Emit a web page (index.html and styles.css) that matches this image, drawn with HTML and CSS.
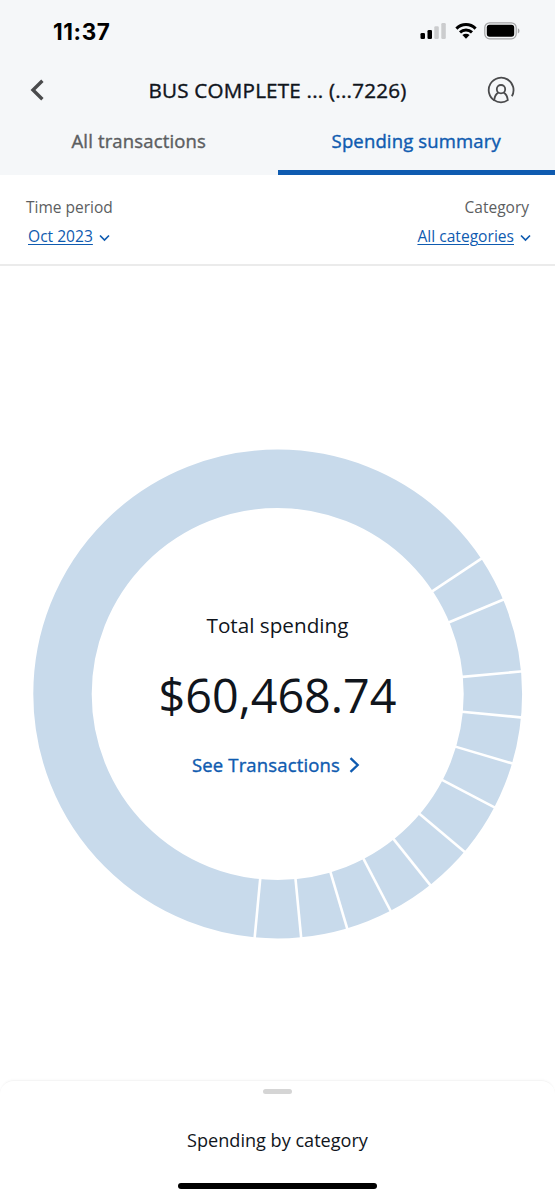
FILE: index.html
```html
<!DOCTYPE html>
<html lang="en">
<head>
    <meta charset="UTF-8">
    <meta name="viewport" content="width=device-width, initial-scale=1.0">
    <title>Spending summary</title>
    <link rel="stylesheet" href="styles.css">
</head>
<body>
    <header class="header">
        <div class="status-bar">
            <span class="time">11:37</span>
            <div class="status-icons">
                <svg class="signal" width="27" height="18" viewBox="0 0 27 18">
                    <rect x="0.5" y="11" width="4.5" height="6" rx="1.3"/>
                    <rect x="7.5" y="8" width="4.5" height="9" rx="1.3"/>
                    <rect class="off" x="14.3" y="4.2" width="4.5" height="12.8" rx="1.3"/>
                    <rect class="off" x="21.3" y="1" width="4.5" height="16" rx="1.3"/>
                </svg>
                <svg class="wifi" width="22" height="18" viewBox="0 0 22 18">
                    <path d="M1.4 6.6C6.8 1.2 15.2 1.2 20.6 6.6"/>
                    <path d="M5 10.3C8.4 7.1 13.6 7.1 17 10.3"/>
                    <path class="dot" d="M7.4 13.1C9.5 11.3 12.5 11.3 14.6 13.1L11 16.8Z"/>
                </svg>
                <svg class="battery" width="36" height="18" viewBox="0 0 36 18">
                    <rect class="shell" x="0.8" y="0.8" width="31.4" height="16" rx="4.8"/>
                    <rect x="2.8" y="2.8" width="27.4" height="12" rx="2.8"/>
                    <path class="tip" d="M33.8 6.3c2.2 .8 2.2 4.4 0 5.2z"/>
                </svg>
            </div>
        </div>

        <div class="nav-bar">
            <svg class="back" width="14" height="22" viewBox="0 0 14 22">
                <path d="M12.4 1.8L3 11L12.4 20.2"/>
            </svg>
            <h1 class="title">BUS COMPLETE ... (...7226)</h1>
            <svg class="profile" width="28" height="28" viewBox="0 0 28 28">
                <path d="M7.6 24.6A12.4 12.4 0 1 1 24.9 20.2"/>
                <circle cx="14" cy="13.2" r="4.2"/>
                <path d="M11.4 16.6C8.6 18 7.6 20.6 7.2 24.1C11 27.1 17 27.1 20.8 24.1C20.4 20.6 19.4 18 16.6 16.6"/>
            </svg>
        </div>

        <nav class="tabs">
            <a class="tab">All transactions</a>
            <a class="tab active">Spending summary</a>
        </nav>
    </header>

    <section class="filters">
        <div class="filter">
            <div class="filter-label">Time period</div>
            <div class="filter-value">
                <a class="link">Oct 2023</a>
                <svg class="chevron" width="11" height="8" viewBox="0 0 11 8"><path d="M1 1.5L5.5 6L10 1.5"/></svg>
            </div>
        </div>
        <div class="filter right">
            <div class="filter-label">Category</div>
            <div class="filter-value">
                <a class="link">All categories</a>
                <svg class="chevron" width="11" height="8" viewBox="0 0 11 8"><path d="M1 1.5L5.5 6L10 1.5"/></svg>
            </div>
        </div>
    </section>

    <main class="chart">
        <svg class="donut" width="490" height="490" viewBox="-244.7 -245 490 490">
            <circle class="ring" r="215.2"/>
            <g class="dividers">
                <path d="M180 0H250" transform="rotate(-33.6)"/>
                <path d="M180 0H250" transform="rotate(-22.7)"/>
                <path d="M180 0H250" transform="rotate(-5.3)"/>
                <path d="M180 0H250" transform="rotate(5.5)"/>
                <path d="M180 0H250" transform="rotate(16.5)"/>
                <path d="M180 0H250" transform="rotate(27.6)"/>
                <path d="M180 0H250" transform="rotate(40.2)"/>
                <path d="M180 0H250" transform="rotate(51.4)"/>
                <path d="M180 0H250" transform="rotate(62.5)"/>
                <path d="M180 0H250" transform="rotate(73.5)"/>
                <path d="M180 0H250" transform="rotate(84.5)"/>
                <path d="M180 0H250" transform="rotate(95.4)"/>
            </g>
        </svg>
        <div class="summary">
            <div class="summary-label">Total spending</div>
            <div class="amount">$60,468.74</div>
            <a class="see-transactions">
                <span class="see-label">See Transactions</span>
                <svg width="11" height="16" viewBox="0 0 11 16"><path d="M1.5 1.2L8.7 8L1.5 14.8"/></svg>
            </a>
        </div>
    </main>

    <footer class="sheet">
        <div class="handle"></div>
        <div class="sheet-title">Spending by category</div>
        <div class="home-indicator"></div>
    </footer>
</body>
</html>
```
FILE: styles.css
```css
:root {
    --blue: #0f5bb0;
    --ring: #c8daeb;
    --text: #10151c;
    --gray: #5c5e61;
    --header-bg: #f5f7f9;
}

* {
    margin: 0;
    padding: 0;
    box-sizing: border-box;
}

body {
    width: 555px;
    height: 1200px;
    display: flex;
    flex-direction: column;
    overflow: hidden;
    background: #fff;
    color: var(--text);
    font-family: 'Open Sans', 'Noto Sans', sans-serif;
}

svg {
    display: block;
    flex: none;
}

a, span, div, h1 {
    white-space: nowrap;
}

.header {
    height: 175px;
    background: var(--header-bg);
}

.status-bar {
    height: 62px;
    display: flex;
    justify-content: space-between;
    align-items: center;
    padding: 0 35px 0 53px;
}

.time {
    font-family: Inter, sans-serif;
    font-size: 22.5px;
    font-weight: 700;
    letter-spacing: 0.6px;
    color: #000;
}

.status-icons {
    display: flex;
    align-items: center;
    gap: 7.5px;
}

.signal .off {
    fill: #cbccce;
}

.wifi path {
    fill: none;
    stroke: #000;
    stroke-width: 3;
}

.wifi .dot {
    fill: #000;
    stroke: none;
}

.battery .shell {
    fill: none;
    stroke: #a2a3a5;
    stroke-width: 1.2;
}

.battery .tip {
    fill: #a2a3a5;
}

.nav-bar {
    height: 55px;
    display: grid;
    grid-template-columns: 1fr auto 1fr;
    align-items: center;
    padding: 0 40px 0 30px;
}

.back path {
    fill: none;
    stroke: #4a4b4d;
    stroke-width: 3.4;
}

/* thin stroke gives a medium weight between 400 and 600 */
.title,
.tab,
.see-label {
    font-weight: 400;
    -webkit-text-stroke: 0.4px currentColor;
}

.title {
    padding-left: 10px;
    font-size: 20.6px;
    letter-spacing: 0.22px;
}

.profile {
    justify-self: end;
}

.profile path,
.profile circle {
    fill: none;
    stroke: #4a4b4d;
    stroke-width: 1.8;
}

.tabs {
    height: 58px;
    display: flex;
}

.tab {
    flex: 1;
    padding-top: 11px;
    text-align: center;
    font-size: 18.5px;
    letter-spacing: 0.15px;
    line-height: 26px;
    color: var(--gray);
}

.tab.active {
    color: var(--blue);
    border-bottom: 5px solid var(--blue);
}

.filters {
    height: 91px;
    display: flex;
    justify-content: space-between;
    padding: 20px 24px 0 26px;
    border-bottom: 2px solid #ebebeb;
}

.filter-label {
    font-size: 15.5px;
    line-height: 24px;
    color: var(--gray);
}

.filter-value {
    display: flex;
    align-items: center;
    gap: 6px;
    margin-top: 5px;
    padding-left: 2px;
}

.right {
    text-align: right;
}

.right .filter-label {
    padding-right: 2px;
}

.link {
    font-size: 15.6px;
    line-height: 24px;
    color: var(--blue);
    text-decoration: underline;
    text-decoration-thickness: 1px;
    text-underline-offset: 2px;
}

.chevron {
    margin-top: 3px;
}

.chevron path {
    fill: none;
    stroke: var(--blue);
    stroke-width: 1.7;
}

.chart {
    height: 814px;
    display: grid;
    justify-items: center;
    padding-top: 183px;
    align-items: start;
}

.donut,
.summary {
    grid-area: 1 / 1;
}

.ring {
    fill: none;
    stroke: var(--ring);
    stroke-width: 58.4;
}

.dividers {
    stroke: #fff;
    stroke-width: 2.6;
}

.summary {
    display: flex;
    flex-direction: column;
    align-items: center;
    padding-top: 161px;
}

.summary-label {
    font-size: 20.7px;
    line-height: 30px;
}

.amount {
    margin-top: 20px;
    font-size: 46.7px;
    line-height: 70px;
}

.see-transactions {
    display: flex;
    align-items: center;
    gap: 9px;
    margin-top: 21px;
    padding-right: 3px;
    color: var(--blue);
    font-size: 18.5px;
    letter-spacing: 0.15px;
    line-height: 28px;
}

.see-transactions path {
    fill: none;
    stroke: var(--blue);
    stroke-width: 2.3;
}

.sheet {
    height: 120px;
    display: flex;
    flex-direction: column;
    align-items: center;
    border-top: 1px solid #f5f5f5;
    border-radius: 14px 14px 0 0;
    box-shadow: 0 -1px 2px rgba(0, 0, 0, 0.02);
}

.handle {
    width: 29px;
    height: 5px;
    margin-top: 8px;
    border-radius: 3px;
    background: #d5d5d5;
}

.sheet-title {
    margin-top: 33px;
    font-size: 18.1px;
    line-height: 26px;
}

.home-indicator {
    width: 199px;
    height: 6px;
    margin-top: 30px;
    border-radius: 3px;
    background: #000;
}
```
